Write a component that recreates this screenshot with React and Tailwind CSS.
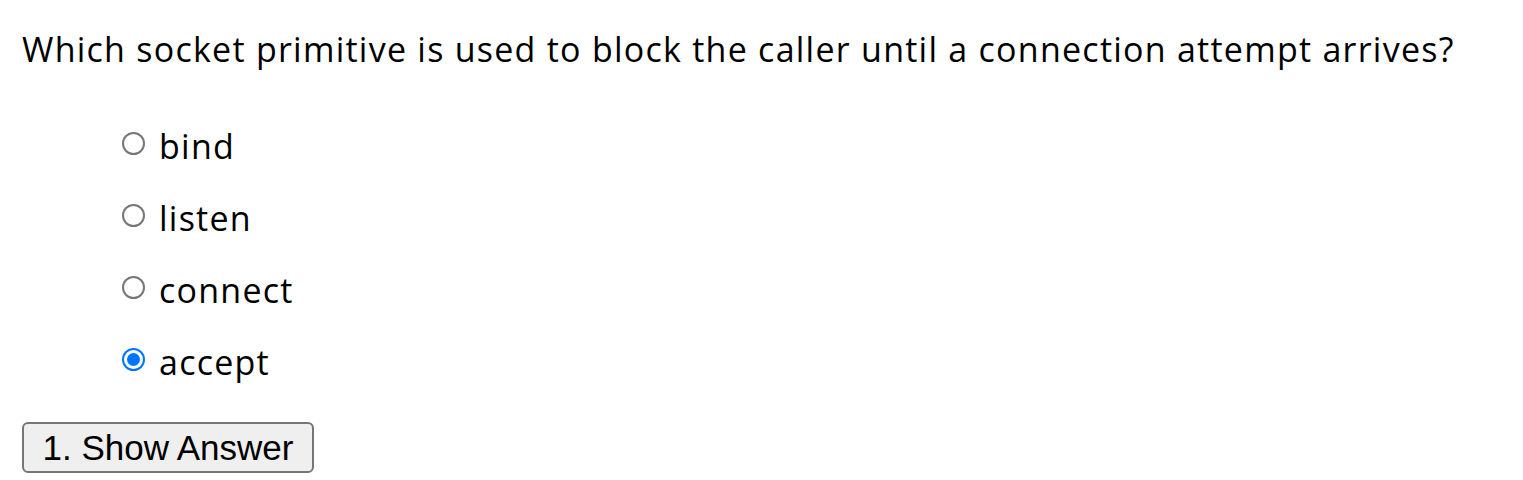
import React, { useState } from 'react';

const options = ['bind', 'listen', 'connect', 'accept'];

function Radio({ checked }) {
  if (checked) {
    return (
      <span className="mb-[6px] flex h-[23px] w-[23px] items-center justify-center rounded-full border-[2.5px] border-[#0075ff] bg-white">
        <span className="h-[13px] w-[13px] rounded-full bg-[#0075ff]" />
      </span>
    );
  }
  return <span className="mb-[6px] block h-[23px] w-[23px] rounded-full border-2 border-[#767676] bg-white" />;
}

export default function App() {
  const [picked, setPicked] = useState('accept');

  return (
    <div className="bg-white text-black" style={{ fontFamily: '"Open Sans", "Noto Sans", sans-serif' }}>
      <div className="px-[22px] pt-[26px]">
        <p className="whitespace-nowrap text-[34px] leading-[46px] tracking-[1.25px]">
          Which socket primitive is used to block the caller until a connection attempt arrives?
        </p>
        <ul className="mt-[38px] pl-[100px]">
          {options.map((opt) => (
            <li key={opt} className="flex h-[72px] items-center">
              <button
                type="button"
                onClick={() => setPicked(opt)}
                className="flex cursor-pointer items-center"
              >
                <Radio checked={picked === opt} />
                <span className="ml-[14px] text-[34px] leading-[46px] tracking-[1.25px]">{opt}</span>
              </button>
            </li>
          ))}
        </ul>
        <button
          type="button"
          className="mt-[24px] flex h-[51px] w-[292px] items-center justify-center rounded-[6px] border-2 border-[#767676] bg-[#efefef] text-[35px] leading-none text-black"
          style={{ fontFamily: '"Liberation Sans", Arial, sans-serif' }}
        >
          1. Show Answer
        </button>
      </div>
    </div>
  );
}
